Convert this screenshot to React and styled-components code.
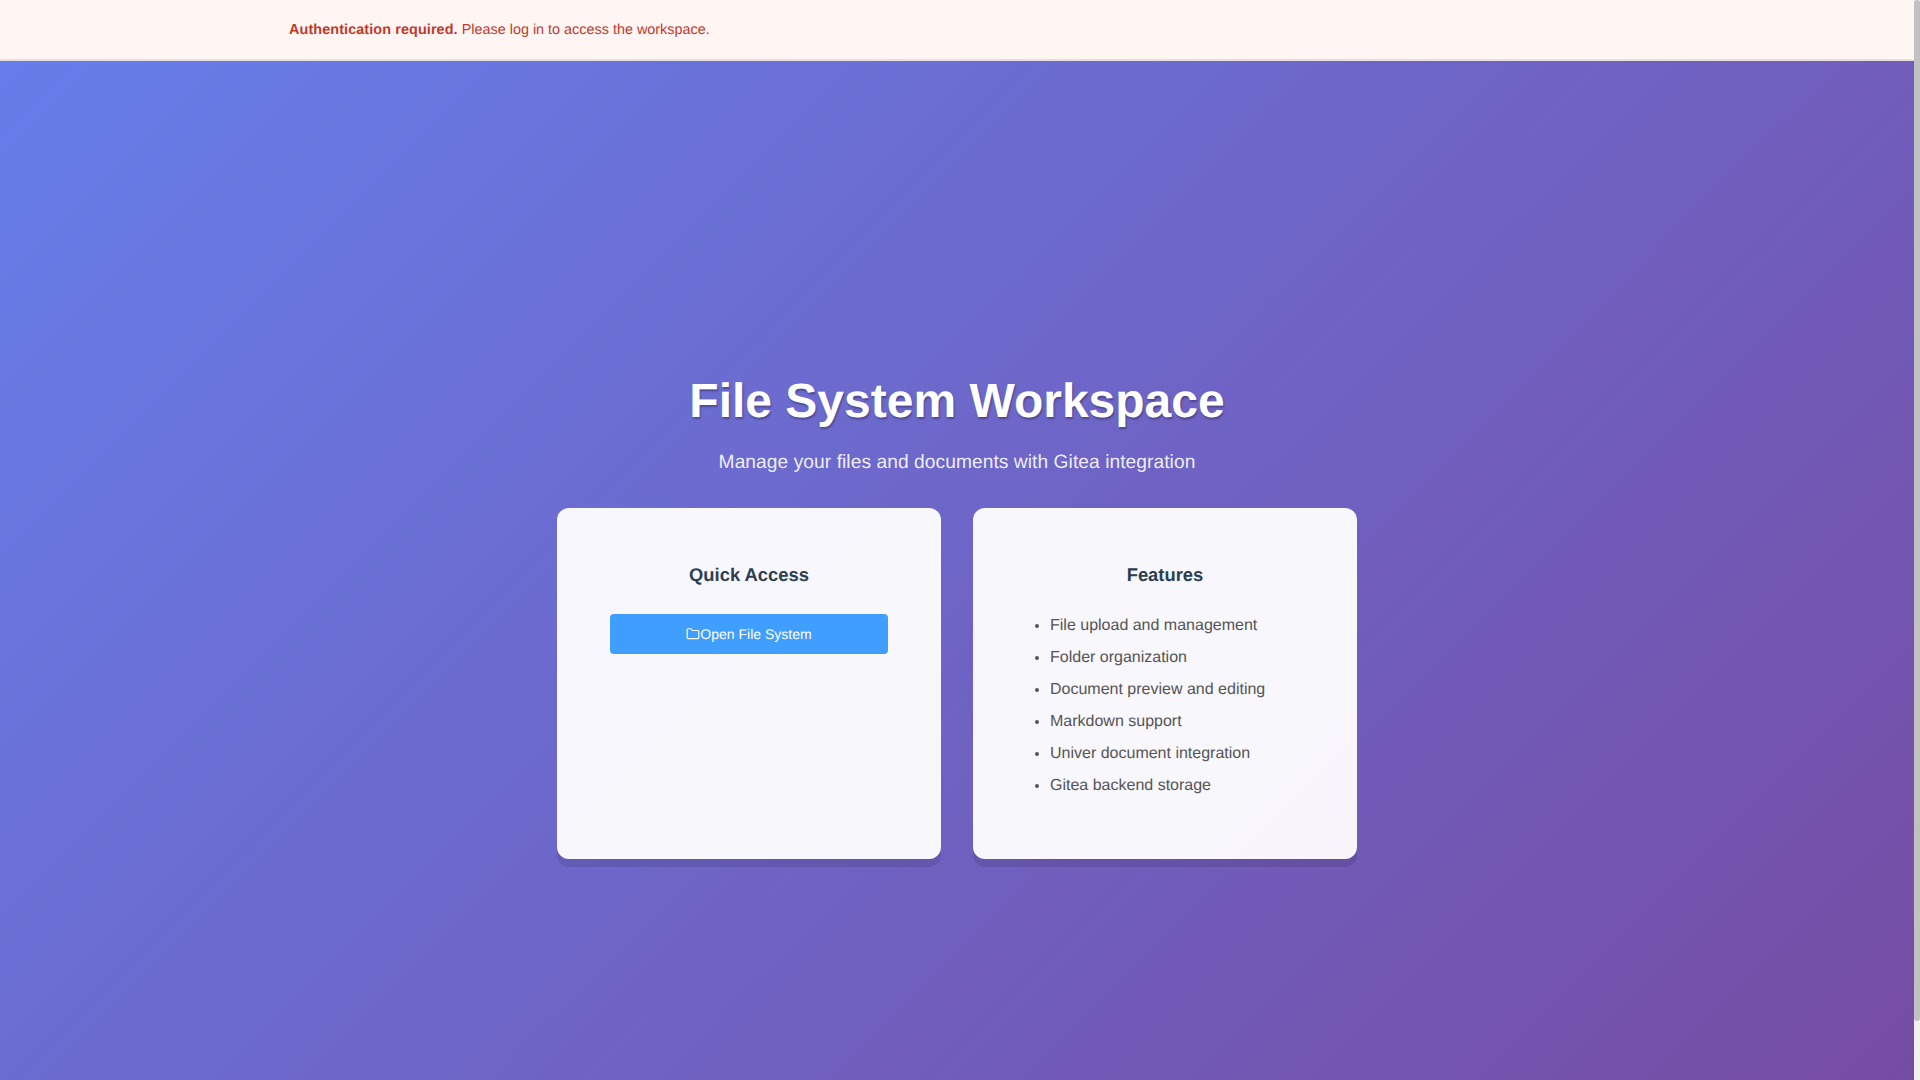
import React from "react";
import styled, { createGlobalStyle } from "styled-components";

const Global = createGlobalStyle`
  html, body { margin: 0; padding: 0; height: 100%; overflow: hidden; }
  body {
    font-family: "Liberation Sans", Arial, sans-serif;
    text-rendering: geometricPrecision;
  }
  * { box-sizing: border-box; }
`;

const Page = styled.div`
  height: 100vh;
  display: flex;
`;

const Viewport = styled.div`
  flex: 1;
  min-width: 0;
  height: 100vh;
  overflow: hidden;
`;

const ScrollRail = styled.div`
  flex: 0 0 6px;
  height: 100vh;
  background: #f1f1f1;
`;

const ScrollThumb = styled.div`
  height: 1021px;
  background: #c1c1c1;
  border-radius: 3px;
`;

const Banner = styled.div`
  height: 61px;
  background: #fff5f3;
  border-bottom: 2px solid #e9dfe0;
  padding: 0 0 0 289px;
  font-size: 14.4px;
  line-height: 60px;
  color: #c0392b;
`;

const BannerStrong = styled.strong`
  font-weight: 700;
  letter-spacing: 0.1px;
`;

const Hero = styled.main`
  min-height: 100vh;
  background: linear-gradient(135deg, #667eea 0%, #764ba2 100%);
  display: flex;
  flex-direction: column;
  align-items: center;
  justify-content: center;
  padding-top: 30px;
`;

const Title = styled.h1`
  margin: 0 0 17px;
  font-size: 48px;
  font-weight: 700;
  line-height: 58px;
  color: #fff;
  text-shadow: 1px 2px 2px rgba(0, 0, 0, 0.3);
  text-align: center;
`;

const Subtitle = styled.p`
  margin: 0 0 30px;
  font-size: 19.2px;
  letter-spacing: 0.06px;
  line-height: 30px;
  color: rgba(255, 255, 255, 0.9);
  text-align: center;
`;

const Cards = styled.div`
  width: 800px;
  display: grid;
  grid-template-columns: 1fr 1fr;
  gap: 32px;
`;

const Card = styled.section`
  height: 351px;
  background: rgba(255, 255, 255, 0.95);
  border-radius: 12px;
  padding: 53px 53px 0;
  box-shadow: 0 8px 0 rgba(0, 0, 0, 0.1);
`;

const CardTitle = styled.h3`
  margin: 0 0 25px;
  font-size: 18.4px;
  line-height: 28px;
  font-weight: 700;
  color: #2c3e50;
  text-align: center;
`;

const OpenButton = styled.button`
  width: 100%;
  height: 40px;
  border: none;
  border-radius: 4px;
  background: #409eff;
  color: #fff;
  font: 14px "Liberation Sans", Arial, sans-serif;
  text-rendering: geometricPrecision;
  display: flex;
  align-items: center;
  justify-content: center;
`;

const FeatureList = styled.ul`
  margin: -4px 0 0;
  padding: 0 0 0 24px;
  color: #555;
  font-size: 16px;
`;

const Feature = styled.li`
  height: 32px;
  line-height: 32px;
`;

const FolderIcon = () => (
  <svg width="14" height="14" viewBox="0 0 24 24" fill="none" stroke="currentColor" strokeWidth="2" strokeLinecap="round" strokeLinejoin="round">
    <path d="M20 20a2 2 0 0 0 2-2V8a2 2 0 0 0-2-2h-7.9a2 2 0 0 1-1.69-.9L9.6 3.9A2 2 0 0 0 7.93 3H4a2 2 0 0 0-2 2v13a2 2 0 0 0 2 2Z" />
  </svg>
);

const features = [
  "File upload and management",
  "Folder organization",
  "Document preview and editing",
  "Markdown support",
  "Univer document integration",
  "Gitea backend storage",
];

export default function App() {
  return (
    <Page>
      <Global />
      <Viewport>
        <Banner>
          <BannerStrong>Authentication required.</BannerStrong> Please log in to access the workspace.
        </Banner>
        <Hero>
          <Title>File System Workspace</Title>
          <Subtitle>Manage your files and documents with Gitea integration</Subtitle>
          <Cards>
            <Card>
              <CardTitle>Quick Access</CardTitle>
              <OpenButton><FolderIcon />Open File System</OpenButton>
            </Card>
            <Card>
              <CardTitle>Features</CardTitle>
              <FeatureList>
                {features.map((f) => <Feature key={f}>{f}</Feature>)}
              </FeatureList>
            </Card>
          </Cards>
        </Hero>
      </Viewport>
      <ScrollRail>
        <ScrollThumb />
      </ScrollRail>
    </Page>
  );
}
